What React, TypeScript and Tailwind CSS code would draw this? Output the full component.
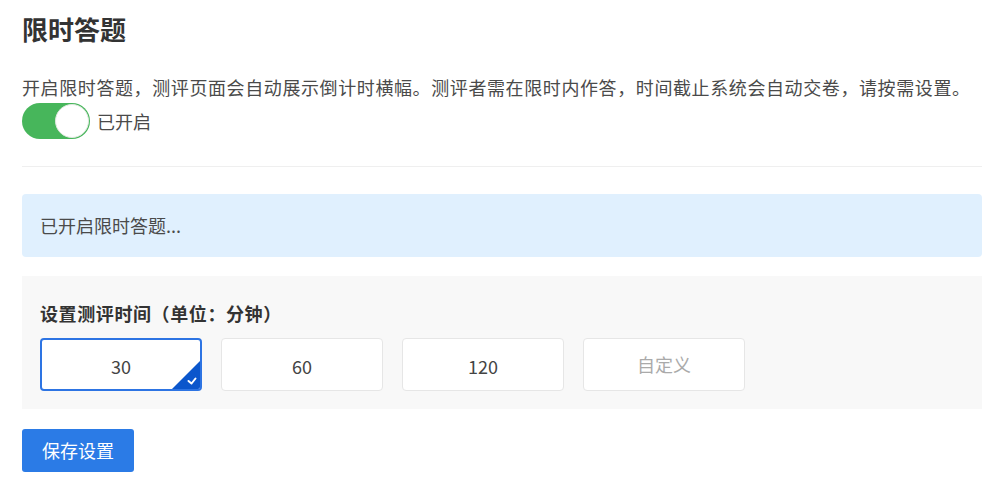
import { useState } from 'react';

const options = ['30', '60', '120'];

export default function App() {
    const [enabled, setEnabled] = useState(true);
    const [selected, setSelected] = useState('30');

    return (
        <div
            className="min-h-screen bg-white pl-[22px] pt-[11px] text-[#4a4a4a]"
            style={{ fontFamily: '"Noto Sans CJK SC", "Noto Sans", sans-serif' }}
        >
            <h1 className="text-[26px] leading-[36px] font-bold text-[#333]">限时答题</h1>

            <p className="mt-[26px] text-[18px] leading-[28px] tracking-[0.6px] whitespace-nowrap">
                开启限时答题，测评页面会自动展示倒计时横幅。测评者需在限时内作答，时间截止系统会自动交卷，请按需设置。
            </p>

            <div className="mt-[2px] flex items-center gap-[7px]">
                <button
                    onClick={() => setEnabled(!enabled)}
                    className={`relative w-[68px] h-[36px] rounded-full transition-colors ${enabled ? 'bg-[#47b65b]' : 'bg-[#dcdcdc]'}`}
                >
                    <span
                        className={`absolute top-[1px] w-[34px] h-[34px] rounded-full bg-white border border-[#dfe8df] transition-all ${enabled ? 'left-[33px]' : 'left-[1px]'}`}
                    />
                </button>
                <span className="text-[18px] leading-[28px]">{enabled ? '已开启' : '已关闭'}</span>
            </div>

            <div className="mt-[27px] border-t border-[#efefef]" />

            {/* 提示 */}
            <div className="mt-[27px] h-[63px] flex items-center px-[18px] bg-[#e0f0fe] rounded-[4px] text-[18px]">
                已开启限时答题...
            </div>

            {/* 时间设置 */}
            <div className="mt-[19px] bg-[#f8f8f8] px-[18px] pt-[23px] pb-[18px]">
                <p className="text-[18px] leading-[28px] font-bold tracking-[0.6px] text-[#333]">设置测评时间（单位：分钟）</p>
                <div className="mt-[11px] flex gap-[19px]">
                    {options.map((opt) => (
                        <button
                            key={opt}
                            onClick={() => setSelected(opt)}
                            className={`relative w-[162px] h-[53px] bg-white rounded-[4px] overflow-hidden pt-[4px] text-[18px] text-[#444] ${selected === opt ? 'border-2 border-[#2d74e3]' : 'border border-[#e6e6e6]'}`}
                        >
                            {opt}
                            {selected === opt && (
                                <svg className="absolute right-0 bottom-0" width="28" height="28" viewBox="0 0 28 28">
                                    <path d="M28 0 L28 28 L0 28 Z" fill="#0b56cc" />
                                    <path d="M16.5 20 L19.5 22.5 L23.5 17.5" stroke="white" strokeWidth="2" fill="none" strokeLinecap="round" strokeLinejoin="round" />
                                </svg>
                            )}
                        </button>
                    ))}
                    <button className="w-[162px] h-[53px] bg-white rounded-[4px] border border-[#e6e6e6] text-[18px] text-[#aaa]">
                        自定义
                    </button>
                </div>
            </div>

            <button className="mt-[20px] w-[112px] h-[43px] bg-[#2b7be6] rounded-[3px] text-white text-[18px]">
                保存设置
            </button>
        </div>
    );
}
